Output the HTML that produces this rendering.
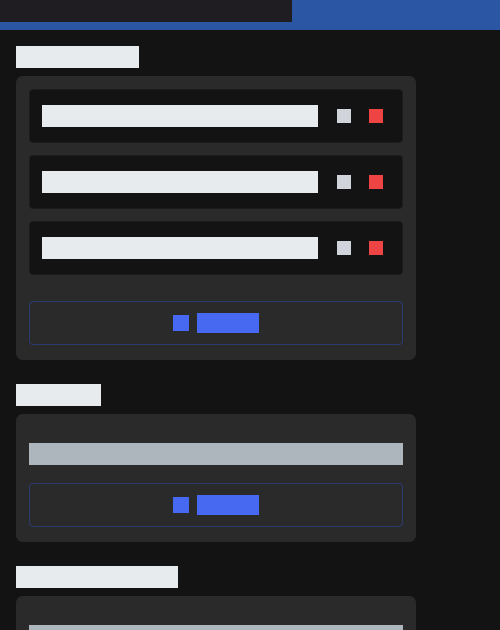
<!DOCTYPE html>
<html style="margin:0;height:630px;overflow:hidden"><head><style>
body{margin:0;width:500px;height:630px;background:#131313;position:relative;overflow:hidden}
div{position:absolute;box-sizing:border-box}
.t{background:#e7ebee;height:22px;left:16px}
.card{background:#2a2a2a;border-radius:7px;left:16px;width:400px}
.row{background:#131313;border:1px solid #1c1c1c;border-radius:4px;left:29px;width:374px;height:54px}
.bar{background:#e7ebee;left:42px;width:276px;height:22px}
.g{background:#d1d5db;left:337px;width:14px;height:14px}
.r{background:#ef4444;left:369px;width:14px;height:14px}
.btn{border:1px solid #2c3a6e;border-radius:4px;left:29px;width:374px;height:44px}
.sq{background:#4769f2;left:173px;width:16px;height:16px}
.bb{background:#4769f2;left:197px;width:62px;height:20px}
.gb{background:#adb5bd;left:29px;width:374px;height:22px}
</style></head><body>
<div style="left:0;top:0;width:500px;height:30px;background:#2b56a3"></div>
<div style="left:0;top:0;width:292px;height:22px;background:#1f1d22"></div>
<div class="t" style="top:46px;width:123px"></div>
<div class="card" style="top:76px;height:284px"></div>
<div class="row" style="top:89px"></div><div class="bar" style="top:105px"></div><div class="g" style="top:109px"></div><div class="r" style="top:109px"></div>
<div class="row" style="top:155px"></div><div class="bar" style="top:171px"></div><div class="g" style="top:175px"></div><div class="r" style="top:175px"></div>
<div class="row" style="top:221px"></div><div class="bar" style="top:237px"></div><div class="g" style="top:241px"></div><div class="r" style="top:241px"></div>
<div class="btn" style="top:301px"></div><div class="sq" style="top:315px"></div><div class="bb" style="top:313px"></div>
<div class="t" style="top:384px;width:85px"></div>
<div class="card" style="top:414px;height:128px"></div>
<div class="gb" style="top:443px"></div>
<div class="btn" style="top:483px"></div><div class="sq" style="top:497px"></div><div class="bb" style="top:495px"></div>
<div class="t" style="top:566px;width:162px"></div>
<div class="card" style="top:596px;height:34px;border-radius:7px 7px 0 0"></div>
<div class="gb" style="top:625px;height:5px"></div>
</body></html>
